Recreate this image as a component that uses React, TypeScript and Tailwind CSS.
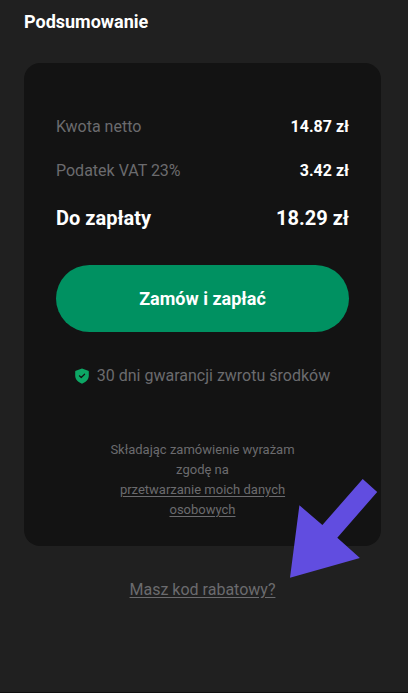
const rows = [
  { label: "Kwota netto", value: "14.87 zł" },
  { label: "Podatek VAT 23%", value: "3.42 zł" },
];

function ShieldIcon() {
  return (
    <svg viewBox="0 0 14 16" className="h-4 w-3.5 shrink-0" aria-hidden="true">
      <path
        d="M7 .5 13.2 2.7q.6.2.6.9V7.5c0 4-2.8 6.5-6.8 8.2C3 14 .2 11.5 .2 7.5V3.6q0-.7.6-.9Z"
        fill="#0da765"
      />
      <path
        d="m4.4 7.8 1.8 1.7 3.4-3.3"
        fill="none"
        stroke="#131313"
        strokeWidth="1.2"
        strokeLinecap="round"
        strokeLinejoin="round"
      />
    </svg>
  );
}

function Arrow() {
  return (
    <svg
      viewBox="0 0 88 99"
      className="pointer-events-none absolute right-[3px] -bottom-8 h-[99px] w-[88px]"
      aria-hidden="true"
    >
      <path d="M72.7 0 87.2 13 47.3 58.7 69.9 79 0 98.8 9.4 26.3 32.4 46Z" fill="#614de0" />
    </svg>
  );
}

export default function App() {
  return (
    <main className="min-h-screen border-b border-[#0f0f0f] bg-[#202020] pt-2 pr-[27px] pb-8 pl-6 font-[Roboto,sans-serif] text-base text-[#6b6b6e]">
      <h1 className="text-lg leading-7 font-bold text-white">Podsumowanie</h1>

      <section className="relative mt-[27px] rounded-2xl bg-[#131313] px-8 pt-[52px] pb-[26px]">
        <dl className="flex flex-col gap-5">
          {rows.map((row) => (
            <div key={row.label} className="flex items-center justify-between leading-6">
              <dt>{row.label}</dt>
              <dd className="font-bold text-white">{row.value}</dd>
            </div>
          ))}
          <div className="flex items-center justify-between text-xl leading-[30px] font-bold text-white">
            <dt>Do zapłaty</dt>
            <dd>18.29 zł</dd>
          </div>
        </dl>

        <button
          type="button"
          className="mt-8 h-[67px] w-full rounded-full bg-[#009161] text-lg font-bold text-white"
        >
          Zamów i zapłać
        </button>

        <p className="-mx-4 mt-8 flex items-center justify-center gap-2 leading-6">
          <ShieldIcon />
          30 dni gwarancji zwrotu środków
        </p>

        <p className="mx-auto mt-[52px] max-w-[200px] text-center text-[13px] leading-5">
          Składając zamówienie wyrażam zgodę na{" "}
          <a href="#dane" className="inline-block underline underline-offset-2">
            przetwarzanie moich danych osobowych
          </a>
        </p>
        <Arrow />
      </section>

      <p className="mt-8 text-center leading-6">
        <a href="#rabat" className="underline underline-offset-2">
          Masz kod rabatowy?
        </a>
      </p>
    </main>
  );
}
